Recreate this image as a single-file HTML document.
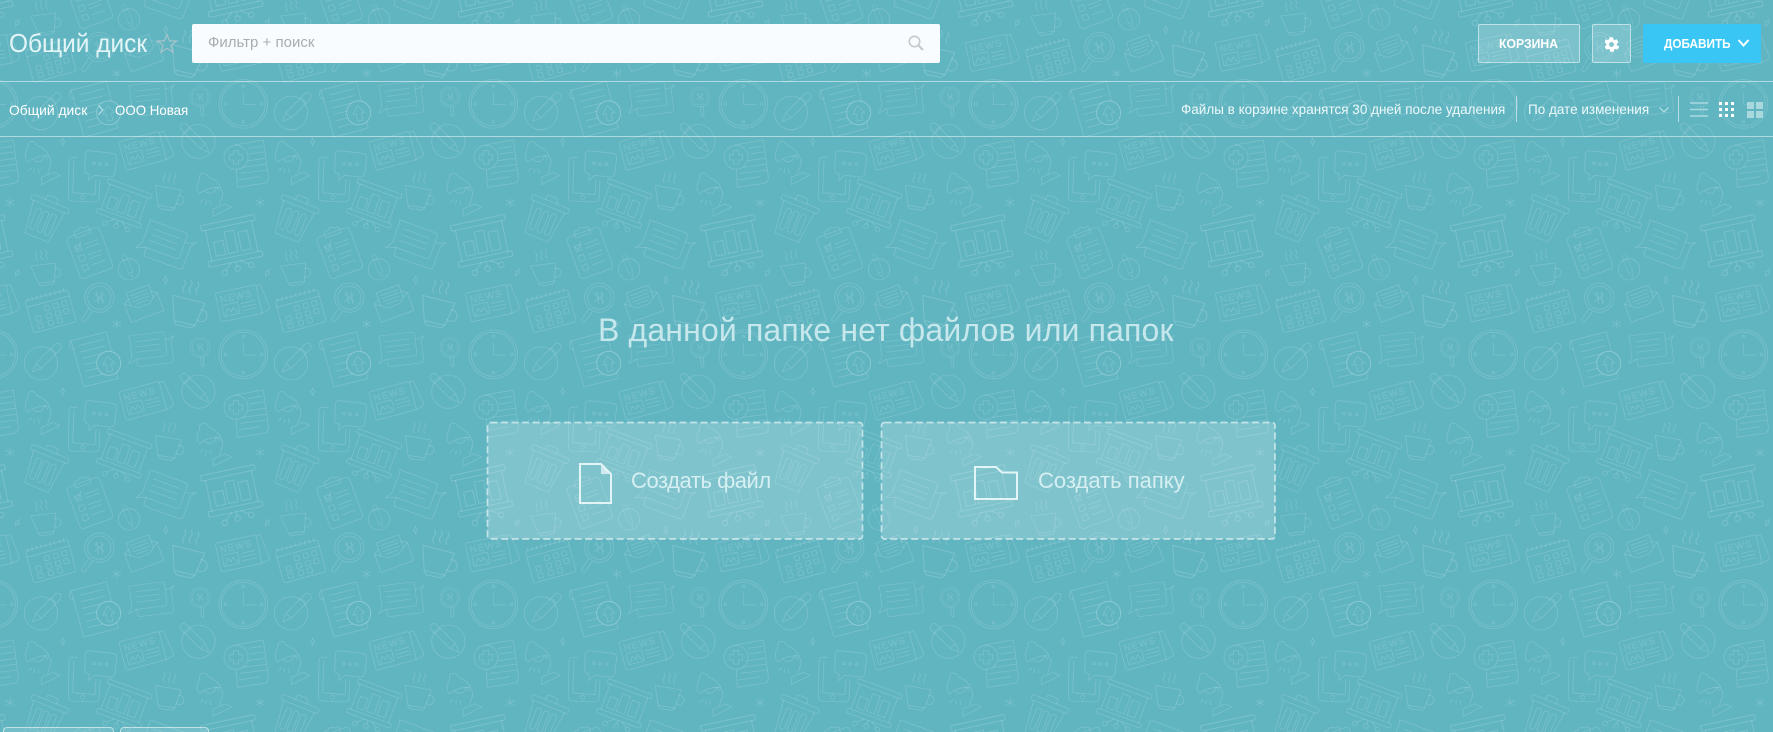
<!DOCTYPE html>
<html lang="ru"><head><meta charset="utf-8"><title>Общий диск</title>
<style>
html,body{margin:0;padding:0;width:1773px;height:732px;overflow:hidden;background:#60b5c1;font-family:"Liberation Sans","DejaVu Sans",sans-serif;color:#fff}
.a{position:absolute;white-space:nowrap}
#bg{position:absolute;left:0;top:0}
.ln{position:absolute;left:0;width:1773px;height:1px;background:rgba(255,255,255,.5)}
</style></head><body>
<svg id="bg" width="1773" height="732" xmlns="http://www.w3.org/2000/svg">
<defs>
<g id="news"><rect x="-72" y="-44" width="125" height="88" rx="5"/><path d="M53 -40 L66 -42 L78 28 Q79 38 68 40 L50 44"/><text x="-62" y="-12" font-size="29" letter-spacing="3" stroke-width="1.2" font-family="Liberation Sans,sans-serif">NEWS</text><rect x="-60" y="-4" width="48" height="34" rx="2"/><path d="M-55 26 L-44 8 L-36 20 L-28 8 L-17 26"/><path d="M-2 2H40M-2 13H40M-2 24H40"/></g>
<g id="pencil"><path d="M-50 -11H30L56 0L30 11H-50A11 11 0 0 1 -50 -11ZM-34 -11V11M30 -11V11"/></g>
<g id="lamp"><path d="M77 85C72 65 84 58 84 50C80 32 104 28 110 46C128 52 142 65 147 78C125 75 100 82 84 96Q78 92 77 85Z"/><path d="M100 88A18 18 0 0 0 132 78"/><path d="M146 80Q158 92 150 110L143 130M135 76L142 88"/><path d="M124 164V142L160 127L180 136Z"/><path d="M85 122L95 114M102 128L104 116M118 129L115 117"/></g>
<g id="cup"><path d="M0 0L78 14L58 68L8 60Z"/><path d="M70 30A14 14 0 1 1 62 54"/><path d="M8 62L14 70L50 75L58 68"/><path d="M26 -8Q20 -18 26 -24Q32 -30 26 -38M42 -8Q36 -18 42 -24Q48 -30 42 -38M58 -6Q52 -16 58 -22Q64 -28 58 -36"/></g>
<g id="trash"><rect x="-60" y="-54" width="120" height="16" rx="6"/><path d="M-18 -54V-62Q-18 -70 -10 -70H10Q18 -70 18 -62V-54"/><path d="M-50 -38L-38 62H38L50 -38"/><rect x="-32" y="-22" width="16" height="66" rx="6"/><rect x="-8" y="-22" width="16" height="66" rx="6"/><rect x="16" y="-22" width="16" height="66" rx="6"/></g>
<g id="pres"><rect x="-70" y="-62" width="140" height="14" rx="3"/><path d="M-60 -48V32M60 -48V32"/><rect x="-70" y="32" width="140" height="14" rx="3"/><rect x="-46" y="-14" width="24" height="36"/><rect x="-14" y="-34" width="24" height="56"/><rect x="20" y="-26" width="24" height="48"/><path d="M-12 46L-30 62M0 46V58M12 46L30 58"/><circle cx="-34" cy="68" r="7"/><circle cx="0" cy="64" r="7"/><circle cx="36" cy="62" r="7"/></g>
<g id="speech"><path d="M-62 -44H50Q60 -44 60 -34V28Q60 38 50 38H-46L-74 50L-60 28V-34Q-62 -44 -62 -44Z"/><path d="M-42 -22H40M-42 -4H40M-42 14H40"/><path d="M60 -18H74L92 -28L80 -12V54Q80 64 70 64H-34Q-44 64 -44 54V38"/></g>
<g id="arrowc"><circle r="36"/><path d="M0 -22L18 2H8V24H-8V2H-18Z"/></g>
<g id="mag"><circle r="44"/><circle r="35"/><path d="M-14 -12L14 12M-14 12L14 -12M-8 -18L-2 18M6 -18L10 18"/></g>
<g id="ast"><path d="M0 -13V13M-12 -7L12 7M-12 7L12 -7"/></g>
<g id="st4"><path d="M0 -12Q2 -2 7 0Q2 2 0 12Q-2 2 -7 0Q-2 -2 0 -12Z"/></g>
<g id="t" fill="none" stroke="#fff" stroke-opacity=".155" stroke-width="2.5" stroke-linejoin="round" stroke-linecap="round">
<use href="#news" transform="translate(437 60) rotate(-15)"/>
<use href="#news" transform="translate(725 518) rotate(-12)"/>
<circle cx="595" cy="35" r="50"/><use href="#pencil" transform="translate(587 27) rotate(45)"/>
<circle cx="123" cy="700" r="50"/><use href="#pencil" transform="translate(137 686) rotate(135)"/>
<circle cx="387" cy="418" r="32"/><use href="#pencil" transform="translate(385 410) rotate(68) scale(.62)"/>
<path d="M705 45L790 30L805 140Q806 158 792 160L712 172Z"/><path d="M745 55L785 49M748 72L790 66M745 92L795 85M728 112L797 103M722 130L800 120M716 150L780 140"/><circle cx="708" cy="82" r="36" fill="#60b5c1"/><path d="M700 62H716V74H728V90H716V102H700V90H688V74H700Z"/>
<use href="#lamp"/><use href="#lamp" transform="translate(515 95)"/>
<path d="M232 82H216Q208 84 207 92L205 200Q205 212 216 213L285 216Q296 215 297 205L300 150"/><path d="M222 92L218 188L285 194L288 148"/><circle cx="248" cy="202" r="6"/>
<path d="M268 62L338 70Q350 72 350 84L344 130Q342 142 330 141L284 136L266 152L268 132Q254 132 254 118L256 72Q258 62 268 62Z"/><circle cx="282" cy="100" r="4"/><circle cx="300" cy="102" r="4"/><circle cx="320" cy="103" r="4"/>
<use href="#cup" transform="translate(466 166)"/>
<use href="#cup" transform="translate(92 408) rotate(-17) scale(.95)"/>
<use href="#cup" transform="translate(518 496) scale(1.25) rotate(4)"/>
<use href="#trash" transform="translate(133 265) rotate(22)"/>
<use href="#pres" transform="translate(370 228) rotate(20)"/>
<use href="#pres" transform="translate(697 342) rotate(-12) scale(1.18)"/>
<g transform="translate(268 365) rotate(-20)"><rect x="-52" y="-62" width="104" height="132" rx="10"/><path d="M-24 -60V-68Q-24 -72 -18 -72H-10A12 12 0 0 1 10 -72H18Q24 -72 24 -66V-52H-24Z"/><rect x="-36" y="-30" width="17" height="17"/><rect x="-36" y="2" width="17" height="17"/><rect x="-36" y="32" width="17" height="17"/><path d="M-36 -28L-28 -18L-14 -38M-6 -26H36M-6 -14H36M-6 8H36M-6 20H30M-6 40H36"/></g>
<use href="#speech" transform="translate(493 332) rotate(20)"/>
<use href="#speech" transform="translate(445 650) rotate(-7) scale(.88)"/>
<g transform="translate(151 540) rotate(-15)"><rect x="-66" y="-46" width="132" height="100" rx="6"/><path d="M-66 -26H66M-58 -52V-42M-44 -52V-42M-30 -52V-42M-16 -52V-42M-2 -52V-42M12 -52V-42M26 -52V-42M40 -52V-42M54 -52V-42"/><rect x="-16" y="-16" width="15" height="15" rx="2"/><rect x="12" y="-16" width="15" height="15" rx="2"/><rect x="38" y="-16" width="15" height="15" rx="2"/><rect x="-48" y="8" width="15" height="15" rx="2"/><rect x="-16" y="8" width="15" height="15" rx="2"/><rect x="12" y="8" width="15" height="15" rx="2"/><rect x="38" y="8" width="15" height="15" rx="2"/><rect x="-48" y="30" width="15" height="15" rx="2"/><rect x="-16" y="30" width="15" height="15" rx="2"/><rect x="12" y="30" width="15" height="15" rx="2"/></g>
<use href="#mag" transform="translate(298 503)"/><path d="M266 536L245 568Q246 578 254 576L276 546"/>
<use href="#mag" transform="translate(600 652) scale(.68)"/><path d="M602 682L604 708Q608 712 612 708L610 682"/>
<g transform="translate(428 520) rotate(-20)"><path d="M-52 -16L-52 42H52V-16L18 8H-18Z"/><path d="M-36 -6V-46H36V-6M-26 -34H26M-26 -24H26M-26 -14H26M-18 -4H18"/><path d="M-52 -16L-36 -26M52 -16L36 -26"/></g>
<circle cx="730" cy="673" r="73"/><circle cx="730" cy="673" r="66"/><path d="M730 640V675H768"/><circle cx="730" cy="619" r="4"/><circle cx="730" cy="728" r="4"/><circle cx="676" cy="673" r="4"/><circle cx="785" cy="673" r="4"/>
<g transform="translate(285 682) rotate(-14)"><path d="M-58 -66H52V78H-54Z"/><path d="M-58 -66Q-66 -60 -66 -48Q-66 -38 -54 -40"/><path d="M-36 -46H38M-36 -26H38M-36 -6H24M-36 14H14M-36 34H14M-36 54H36"/></g>
<circle cx="326" cy="700" r="36" fill="#60b5c1"/><use href="#arrowc" transform="translate(326 700) rotate(-10)"/>
<use href="#ast" transform="translate(30 218)"/><use href="#ast" transform="translate(350 582)"/>
<use href="#st4" transform="translate(188 35)"/><use href="#st4" transform="translate(497 450)"/><use href="#st4" transform="translate(52 428) rotate(30)"/>
</g>
<pattern id="p" patternUnits="userSpaceOnUse" x="0" y="0" width="750" height="750" patternTransform="translate(0 130) scale(.3333333)">
<use href="#t"/><use href="#t" x="-750"/><use href="#t" y="-750"/><use href="#t" x="750"/><use href="#t" y="750"/>
</pattern>
</defs>
<rect width="1773" height="732" fill="url(#p)"/>
</svg>

<div class="ln" style="top:81px"></div>
<div class="ln" style="top:136px"></div>

<div class="a" style="left:9px;top:26px;font-size:26px;line-height:34px;color:#e4f5f7;transform:scaleX(.94);transform-origin:left">Общий диск</div>
<svg class="a" style="left:156px;top:33px" width="22" height="21" viewBox="0 0 22 21"><path d="M11 1.5L13.6 8H20.5L15 12.3L17 19.3L11 15.3L5 19.3L7 12.3L1.5 8H8.4Z" fill="none" stroke="#a9c4cb" stroke-width="1.2"/></svg>
<div class="a" style="left:192px;top:24px;width:748px;height:39px;background:#f8fcfe;border-radius:2px"></div>
<div class="a" style="left:208px;top:34px;font-size:15px;line-height:18px;color:#a8adb0">Фильтр + поиск</div>
<svg class="a" style="left:907px;top:34px" width="18" height="18" viewBox="0 0 18 18"><circle cx="7.5" cy="7.5" r="5.2" fill="none" stroke="#c5c9cb" stroke-width="1.6"/><path d="M11.5 11.5L16 16" stroke="#c5c9cb" stroke-width="2.2"/></svg>

<div class="a" style="left:1478px;top:24px;width:102px;height:39px;box-sizing:border-box;border:1px solid rgba(255,255,255,.5);border-radius:2px;background:rgba(255,255,255,.18)"></div>
<div class="a" style="left:1499px;top:34px;font-size:13px;font-weight:bold;line-height:19px;transform:scaleX(.94);transform-origin:left">КОРЗИНА</div>
<div class="a" style="left:1592px;top:24px;width:39px;height:39px;box-sizing:border-box;border:1px solid rgba(255,255,255,.5);border-radius:2px;background:rgba(255,255,255,.18)"></div>
<svg class="a" style="left:1603px;top:36px" width="17" height="17" viewBox="0 0 24 24"><path fill="#fff" d="M19.4 13c.1-.3.1-.7.1-1s0-.7-.1-1l2.2-1.7c.2-.2.3-.4.1-.7l-2.1-3.6c-.1-.2-.4-.3-.6-.2l-2.6 1c-.5-.4-1.1-.8-1.8-1l-.4-2.7c0-.3-.2-.4-.5-.4h-4.2c-.3 0-.5.1-.5.4l-.4 2.7c-.6.2-1.2.6-1.8 1l-2.6-1c-.2-.1-.5 0-.6.2L2.5 8.6c-.2.3-.1.5.1.7L4.8 11c-.1.3-.1.7-.1 1s0 .7.1 1l-2.2 1.7c-.2.2-.3.4-.1.7l2.1 3.6c.1.2.4.3.6.2l2.6-1c.5.4 1.1.8 1.8 1l.4 2.7c0 .3.2.4.5.4h4.2c.3 0 .5-.1.5-.4l.4-2.7c.6-.2 1.2-.6 1.8-1l2.6 1c.2.1.5 0 .6-.2l2.1-3.6c.2-.3.1-.5-.1-.7zM12 15.5a3.5 3.5 0 1 1 0-7 3.5 3.5 0 0 1 0 7z"/></svg>
<div class="a" style="left:1643px;top:24px;width:118px;height:39px;background:#3ac6f4;border-radius:1px"></div>
<div class="a" style="left:1664px;top:34px;font-size:13px;font-weight:bold;line-height:19px;transform:scaleX(.905);transform-origin:left">ДОБАВИТЬ</div>
<svg class="a" style="left:1737px;top:38px" width="13" height="10" viewBox="0 0 13 10"><path d="M1.5 2L6.5 7.5L11.5 2" fill="none" stroke="#fff" stroke-width="2"/></svg>

<div class="a" style="left:9px;top:101px;font-size:14px;line-height:18px;transform:scaleX(.99);transform-origin:left">Общий диск</div>
<svg class="a" style="left:96px;top:104px" width="10" height="12" viewBox="0 0 10 12"><path d="M2.5 1.5L7 6L2.5 10.5" fill="none" stroke="#b9e0e6" stroke-width="1.2"/></svg>
<div class="a" style="left:115px;top:101px;font-size:14px;line-height:18px;transform:scaleX(.95);transform-origin:left">ООО Новая</div>

<div class="a" style="left:1181px;top:101px;font-size:13.5px;line-height:18px;color:#eef9fa">Файлы в корзине хранятся 30 дней после удаления</div>
<div class="a" style="left:1516px;top:96px;width:1px;height:26px;background:rgba(255,255,255,.55)"></div>
<div class="a" style="left:1528px;top:101px;font-size:13.5px;line-height:18px;color:#eef9fa">По дате изменения</div>
<svg class="a" style="left:1658px;top:106px" width="12" height="8" viewBox="0 0 12 8"><path d="M1.5 1.5L6 6L10.5 1.5" fill="none" stroke="#b9e0e6" stroke-width="1.2"/></svg>
<div class="a" style="left:1678px;top:96px;width:1px;height:26px;background:rgba(255,255,255,.55)"></div>
<svg class="a" style="left:1690px;top:100px" width="18" height="18" viewBox="0 0 18 18"><path d="M0 3H18M0 9.5H18M0 16H18" stroke="#a9d9df" stroke-width="1.6"/></svg>
<svg class="a" style="left:1719px;top:102px" width="16" height="16" viewBox="0 0 16 16" fill="#fff"><rect width="3" height="3"/><rect x="6" width="3" height="3"/><rect x="12" width="3" height="3"/><rect y="6" width="3" height="3"/><rect x="6" y="6" width="3" height="3"/><rect x="12" y="6" width="3" height="3"/><rect y="12" width="3" height="3"/><rect x="6" y="12" width="3" height="3"/><rect x="12" y="12" width="3" height="3"/></svg>
<svg class="a" style="left:1747px;top:102px" width="16" height="16" viewBox="0 0 16 16" fill="#a9d9df"><rect width="7" height="7"/><rect x="9" width="7" height="7"/><rect y="9" width="7" height="7"/><rect x="9" y="9" width="7" height="7"/></svg>

<div class="a" style="left:598px;top:310px;font-size:32px;line-height:40px;color:#c6e7eb;letter-spacing:.15px">В данной папке нет файлов или папок</div>

<svg class="a" style="left:486px;top:421px" width="792" height="120" viewBox="0 0 792 120" fill="#fff" fill-opacity=".2" stroke="#fff" stroke-opacity=".58" stroke-width="1.7" stroke-dasharray="7 3.5"><rect x="1.5" y="1.5" width="375" height="116.5" rx="3"/><rect x="395.5" y="1.5" width="393.5" height="116.5" rx="3"/></svg>
<svg class="a" style="left:579px;top:463px" width="33" height="41" viewBox="0 0 33 41"><path d="M1 1H22L32 11V40H1Z" fill="none" stroke="#e3f4f6" stroke-width="2"/><path d="M22 2L31 11H22Z" fill="#e3f4f6" opacity=".8"/></svg>
<div class="a" style="left:631px;top:466px;font-size:22px;line-height:30px;color:#d5eff2;letter-spacing:-.45px">Создать файл</div>
<svg class="a" style="left:974px;top:466px" width="44" height="34" viewBox="0 0 44 34"><path d="M1 1H22L28 6.5H43V33H1Z" fill="none" stroke="#e3f4f6" stroke-width="2"/></svg>
<div class="a" style="left:1038px;top:466px;font-size:22px;line-height:30px;color:#d5eff2">Создать папку</div>

<div class="a" style="left:3px;top:727px;width:111px;height:5px;box-sizing:border-box;border:1px solid rgba(255,255,255,.55);border-bottom:0;border-radius:4px 4px 0 0;background:rgba(255,255,255,.12)"></div>
<div class="a" style="left:120px;top:727px;width:89px;height:5px;box-sizing:border-box;border:1px solid rgba(255,255,255,.55);border-bottom:0;border-radius:4px 4px 0 0;background:rgba(255,255,255,.12)"></div>
</body></html>
